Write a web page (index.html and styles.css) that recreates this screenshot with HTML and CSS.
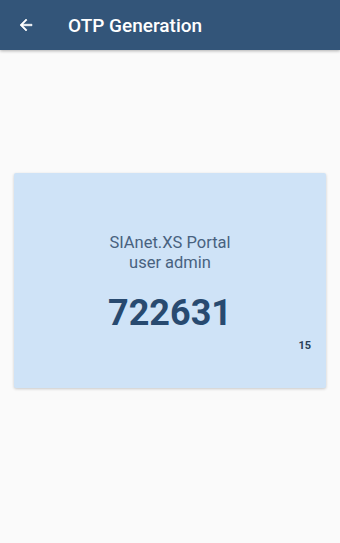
FILE: index.html
```html
<!DOCTYPE html>
<html>
<head>
<meta charset="utf-8">
<link rel="stylesheet" href="styles.css">
</head>
<body>
<header class="appbar">
  <svg class="back" width="18" height="18" viewBox="0 0 24 24"><path d="M20 11H7.83l5.59-5.59L12 4l-8 8 8 8 1.41-1.41L7.83 13H20v-2z" fill="#fff" stroke="#fff" stroke-width="0.8"/></svg>
  <h1 class="title">OTP Generation</h1>
</header>
<main class="content">
  <section class="card">
    <div class="service">SIAnet.XS Portal</div>
    <div class="user">user admin</div>
    <div class="code">722631</div>
    <div class="timer">15</div>
  </section>
</main>
</body>
</html>
```
FILE: styles.css
```css
html, body {
  margin: 0;
  padding: 0;
}
body {
  width: 340px;
  height: 543px;
  background: #fafafa;
  font-family: Roboto, "Liberation Sans", sans-serif;
  overflow: hidden;
}
.appbar {
  height: 50px;
  background: #335579;
  display: flex;
  align-items: center;
  padding-left: 17px;
  box-shadow: 0 1px 3px rgba(0,0,0,0.3);
  box-sizing: border-box;
}
.back {
  display: block;
}
.title {
  margin: 0 0 0 33px;
  font-size: 19px;
  font-weight: 500;
  color: #fff;
}
.content {
  padding: 123px 14px 0;
}
.card {
  height: 215px;
  background: #cfe3f7;
  box-shadow: 0 1px 3px rgba(0,0,0,0.2);
  border-radius: 2px;
  display: flex;
  flex-direction: column;
  align-items: center;
  padding-top: 60px;
  box-sizing: border-box;
}
.service, .user {
  font-size: 16.5px;
  color: #48627f;
  line-height: 20px;
}
.code {
  margin-top: 18px;
  font-size: 36px;
  font-weight: 700;
  color: #284a70;
  line-height: 44px;
}
.timer {
  align-self: flex-end;
  margin-right: 15px;
  margin-top: 4px;
  font-size: 11px;
  font-weight: 700;
  color: #2a3f57;
}
```
